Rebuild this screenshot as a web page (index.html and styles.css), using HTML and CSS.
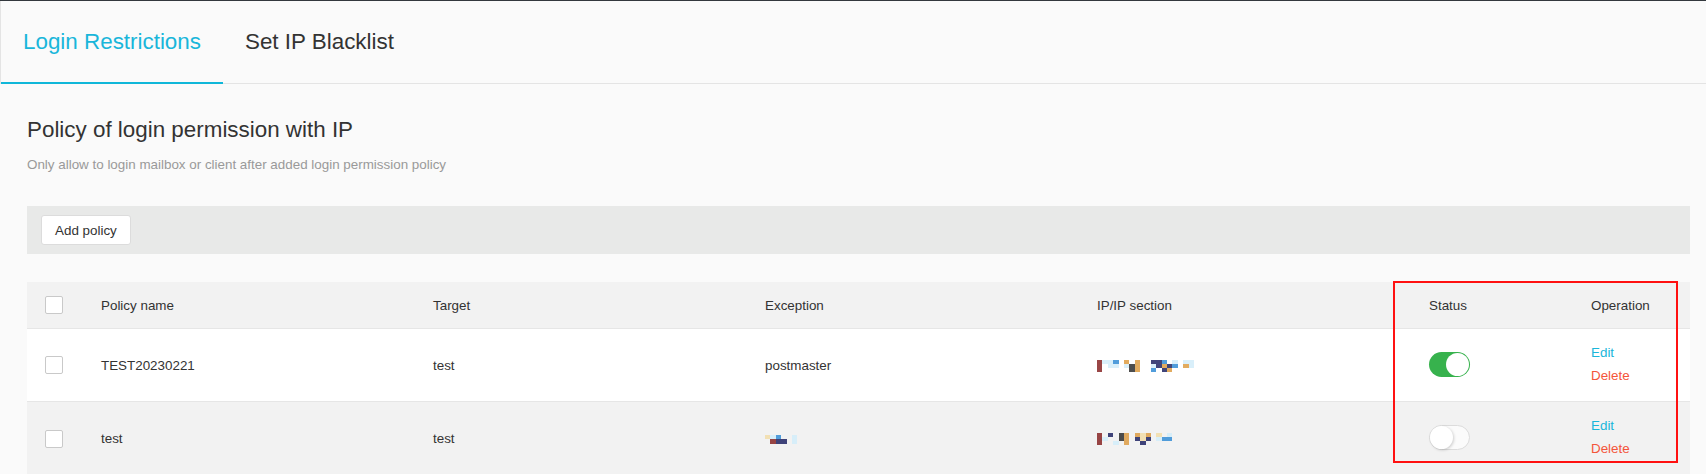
FILE: index.html
```html
<!DOCTYPE html>
<html lang="en">
<head>
<meta charset="utf-8">
<title>Login Restrictions</title>
<link rel="stylesheet" href="styles.css">
</head>
<body>
<div class="page">
  <nav class="tabs">
    <a class="tab active">Login Restrictions</a>
    <a class="tab">Set IP Blacklist</a>
  </nav>

  <section class="content">
    <h1 class="title">Policy of login permission with IP</h1>
    <p class="subtitle">Only allow to login mailbox or client after added login permission policy</p>

    <div class="toolbar">
      <button class="btn">Add policy</button>
    </div>

    <div class="table">
      <div class="row head">
        <div class="cell check"><span class="checkbox"></span></div>
        <div class="cell">Policy name</div>
        <div class="cell">Target</div>
        <div class="cell">Exception</div>
        <div class="cell">IP/IP section</div>
        <div class="cell">Status</div>
        <div class="cell">Operation</div>
      </div>

      <div class="row odd">
        <div class="cell check"><span class="checkbox"></span></div>
        <div class="cell">TEST20230221</div>
        <div class="cell">test</div>
        <div class="cell">postmaster</div>
        <div class="cell">
          <span class="mosaic">
            <i class="r"></i><i class="r"></i><i class="r"></i>
            <i class="l"></i><i></i><i></i>
            <i class="l"></i><i class="l"></i><i></i>
            <i class="b"></i><i class="l"></i><i></i>
            <i></i><i></i><i></i>
            <i class="o"></i><i class="l"></i><i></i>
            <i></i><i class="k"></i><i class="k"></i>
            <i class="o"></i><i class="o"></i><i class="o"></i>
            <i></i><i></i><i></i>
            <i></i><i></i><i></i>
            <i class="n"></i><i class="l"></i><i class="b"></i>
            <i class="n"></i><i class="n"></i><i></i>
            <i class="b"></i><i class="o"></i><i class="n"></i>
            <i></i><i class="n"></i><i class="o"></i>
            <i class="l"></i><i class="b"></i><i></i>
            <i></i><i></i><i></i>
            <i class="l"></i><i class="o"></i><i></i>
            <i class="l"></i><i class="l"></i><i></i>
          </span>
        </div>
        <div class="cell">
          <span class="switch on"><span class="knob"></span></span>
        </div>
        <div class="cell ops">
          <a class="edit">Edit</a>
          <a class="delete">Delete</a>
        </div>
      </div>

      <div class="row even">
        <div class="cell check"><span class="checkbox"></span></div>
        <div class="cell">test</div>
        <div class="cell">test</div>
        <div class="cell">
          <span class="mosaic small">
            <i class="y"></i><i></i>
            <i class="l"></i><i class="r"></i>
            <i class="b"></i><i class="n"></i>
            <i></i><i class="n"></i>
            <i></i><i></i>
            <i class="l"></i><i class="l"></i>
          </span>
        </div>
        <div class="cell">
          <span class="mosaic">
            <i class="r"></i><i class="r"></i><i class="r"></i>
            <i></i><i class="l"></i><i></i>
            <i class="n"></i><i></i><i></i>
            <i></i><i></i><i class="l"></i>
            <i class="k"></i><i class="k"></i><i></i>
            <i class="o"></i><i class="o"></i><i class="o"></i>
            <i></i><i></i><i></i>
            <i class="o"></i><i class="n"></i><i></i>
            <i class="y"></i><i class="y"></i><i class="n"></i>
            <i class="o"></i><i class="n"></i><i></i>
            <i></i><i></i><i></i>
            <i class="y"></i><i class="l"></i><i></i>
            <i></i><i class="b"></i><i></i>
            <i class="l"></i><i class="b"></i><i></i>
          </span>
        </div>
        <div class="cell">
          <span class="switch off"><span class="knob"></span></span>
        </div>
        <div class="cell ops">
          <a class="edit">Edit</a>
          <a class="delete">Delete</a>
        </div>
      </div>
    </div>
  </section>

  <div class="highlight"></div>
</div>
</body>
</html>
```

FILE: styles.css
```css
* {
  box-sizing: border-box;
}

html, body {
  margin: 0;
  padding: 0;
}

body {
  background: #fafafa;
  font-family: "Liberation Sans", Arial, sans-serif;
  color: #333;
  height: 474px;
  overflow: hidden;
}

.page {
  position: relative;
  border-top: 1px solid #33383d;
  min-height: 474px;
}

/* Tabs */
.tabs {
  display: flex;
  height: 83px;
  border-bottom: 1px solid #e4e4e4;
  border-left: 1px solid #e4e4e4;
}

.tab {
  display: block;
  padding: 0 22px;
  height: 83px;
  line-height: 81px;
  font-size: 22.4px;
  color: #333;
  border-bottom: 2px solid transparent;
  margin-bottom: -1px;
  cursor: pointer;
}

.tab.active {
  color: #19b6da;
  border-bottom-color: #10b7d9;
}

/* Content */
.content {
  margin: 0 16px 0 27px;
}

.title {
  margin: 0;
  padding-top: 31px;
  font-size: 22.4px;
  line-height: 30px;
  font-weight: normal;
  color: #333;
}

.subtitle {
  margin: 10px 0 0;
  font-size: 13.4px;
  line-height: 20px;
  color: #999;
}

.toolbar {
  margin-top: 31px;
  height: 48px;
  background: #e8e9e8;
  display: flex;
  align-items: center;
  padding-left: 14px;
}

.btn {
  height: 30px;
  padding: 0 13px;
  border: 1px solid #dcdcdc;
  border-radius: 3px;
  background: #fff;
  font-family: inherit;
  font-size: 13.4px;
  color: #333;
}

/* Table */
.table {
  margin-top: 28px;
}

.row {
  display: grid;
  grid-template-columns: 74px 332px 332px 332px 332px 162px 1fr;
  align-items: center;
  height: 73px;
  border-bottom: 1px solid #e6e6e6;
  font-size: 13.4px;
}

.row.head {
  height: 47px;
  background: #f2f2f2;
}

.row.odd {
  background: #fff;
}

.row.even {
  background: #f2f2f2;
  border-bottom: none;
}

.cell {
  white-space: nowrap;
}

.cell.check {
  padding-left: 18px;
  display: flex;
  align-items: center;
}

.checkbox {
  display: block;
  width: 18px;
  height: 18px;
  background: #fff;
  border: 1px solid #c9c9c9;
  border-radius: 2px;
}

/* Redacted mosaic */
.mosaic {
  display: inline-grid;
  grid-auto-flow: column;
  grid-template-rows: repeat(3, 4px);
  grid-auto-columns: 5.4px;
  vertical-align: middle;
  opacity: 0.9;
}

.mosaic.small {
  grid-template-rows: repeat(2, 4.5px);
}

.mosaic i {
  display: block;
}

.mosaic .r { background: #8e3232; }
.mosaic .b { background: #3f93d8; }
.mosaic .o { background: #dfa24e; }
.mosaic .n { background: #2c316c; }
.mosaic .k { background: #3a3a3a; }
.mosaic .l { background: #d5eefa; }
.mosaic .y { background: #f3dfae; }

/* Switch */
.switch {
  display: block;
  position: relative;
  width: 41px;
  height: 25px;
  border-radius: 13px;
  margin-top: -2px;
}

.switch.on {
  background: #37b24d;
}

.switch.off {
  background: #fbfbfb;
  border: 1px solid #dcdcdc;
}

.switch .knob {
  position: absolute;
  top: 1px;
  width: 23px;
  height: 23px;
  border-radius: 50%;
  background: #fff;
}

.switch.on .knob {
  right: 1px;
}

.switch.off .knob {
  top: 0;
  left: 0;
  box-shadow: 1px 1px 3px rgba(0, 0, 0, 0.18);
}

/* Operations */
.cell.ops {
  display: flex;
  flex-direction: column;
  line-height: 23px;
  margin-top: -3px;
}

.edit {
  color: #1ab6da;
  cursor: pointer;
}

.delete {
  color: #f4553b;
  cursor: pointer;
}

/* Annotation overlay */
.highlight {
  position: absolute;
  left: 1393px;
  top: 280px;
  width: 285px;
  height: 182px;
  border: 2px solid #ff1111;
  pointer-events: none;
}
```
